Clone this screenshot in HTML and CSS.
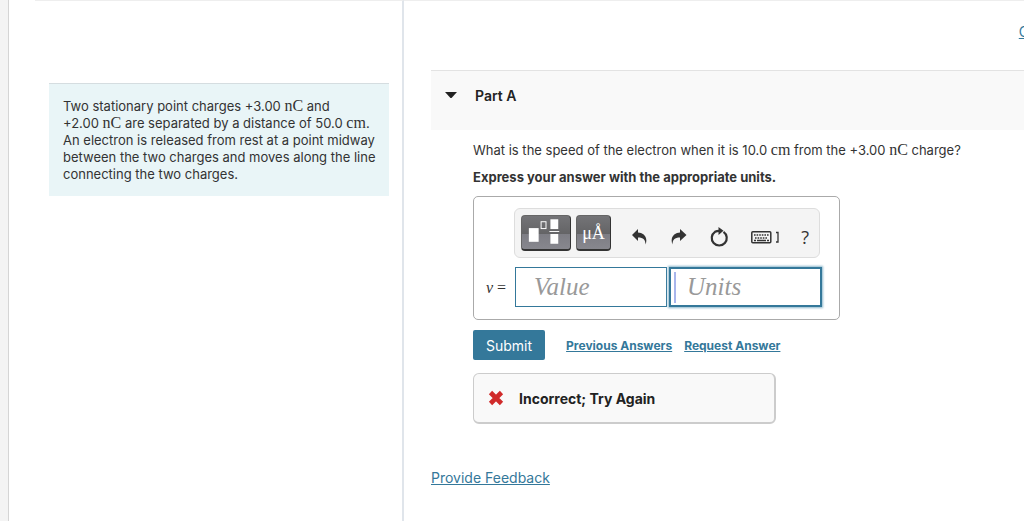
FILE: index.html
```html
<!DOCTYPE html>
<html lang="en">
<head>
    <meta charset="UTF-8">
    <meta name="viewport" content="width=device-width, initial-scale=1.0">
    <title>Part A</title>
    <link rel="stylesheet" href="styles.css">
</head>
<body>
    <div class="page">
        <aside class="sidebar">
            <p class="problem">Two stationary point charges +3.00 <span class="unit">nC</span> and <span class="quantity">+2.00 <span class="unit">nC</span></span> are separated by a distance of 50.0 <span class="unit">cm</span>. An electron is released from rest at a point midway between the two charges and moves along the line connecting the two charges.</p>
        </aside>

        <main class="content">
            <div class="top-links"><a href="#">C</a></div>

            <div class="part-header">
                <svg class="caret" width="12" height="7" viewBox="0 0 12 7"><path d="M0 0h12L7 5.500Q6 6.500 5 5.500z" fill="#222"/></svg>
                <h2>Part A</h2>
            </div>

            <form class="part-body" onsubmit="return false">
                <p class="question">What is the speed of the electron when it is 10.0 <span class="unit">cm</span> from the +3.00 <span class="unit">nC</span> charge?</p>
                <p class="instructions">Express your answer with the appropriate units.</p>

                <div class="answer-box">
                    <div class="toolbar">
                        <button type="button" class="tool tool-dark tool-wide" aria-label="Templates">
                            <svg width="49" height="33" viewBox="0 0 49 33">
                                <rect x="7" y="12" width="10" height="14" fill="#fff"/>
                                <rect x="19.500" y="5.500" width="5" height="7" fill="none" stroke="#fff"/>
                                <rect x="29" y="3" width="8" height="10" fill="#fff"/>
                                <path d="M28 15.500h10" stroke="#fff"/>
                                <rect x="29" y="18" width="8" height="10" fill="#fff"/>
                            </svg>
                        </button>
                        <button type="button" class="tool tool-dark">μÅ</button>
                        <div class="tool-group">
                            <button type="button" class="tool tool-plain" aria-label="Undo">
                                <svg width="17" height="18" viewBox="0 0 17 18"><path d="M1 7L7 1v3.500C12 4.500 17.500 9 14.500 16.500C14.500 12 12.500 9.500 7 9.500V13z" fill="#333"/></svg>
                            </button>
                            <button type="button" class="tool tool-plain" aria-label="Redo">
                                <svg width="17" height="18" viewBox="0 0 17 18"><path d="M16.500 7L10 1v3.500C5 4.500 -.500 9 2.500 16.500C2.500 12 4.500 9.500 10 9.500V13z" fill="#333"/></svg>
                            </button>
                            <button type="button" class="tool tool-plain" aria-label="Reset">
                                <svg width="19" height="20" viewBox="0 0 19 20"><path d="M13.500 4.800A7.500 7.500 0 1 1 5 4.800Q7 3.700 10 3.800" fill="none" stroke="#333" stroke-width="2.200"/><path d="M8.500 0l5 3.800L8.500 8z" fill="#333"/></svg>
                            </button>
                            <button type="button" class="tool tool-plain" aria-label="Keyboard shortcuts">
                                <svg width="28" height="14" viewBox="0 0 28 14"><rect x=".800" y="1.800" width="19" height="11" rx="1" fill="none" stroke="#333" stroke-width="1.500"/><path d="M3 5h15M4 8h13" stroke="#333" stroke-width="1.600" stroke-dasharray="1.600 1"/><path d="M3 10.500h2M6 10.500h9M16 10.500h2" stroke="#333" stroke-width="1.400"/><path d="M25 2.500h2v9.500h-2" fill="none" stroke="#333" stroke-width="1.300"/></svg>
                            </button>
                            <button type="button" class="tool tool-plain help">?</button>
                        </div>
                    </div>
                    <div class="answer-row">
                        <label class="variable" for="value"><i>v</i> =</label>
                        <input type="text" class="field" id="value" placeholder="Value">
                        <input type="text" class="field field-active" id="units" placeholder="Units" aria-label="Units">
                    </div>
                </div>

                <div class="actions">
                    <button type="submit" class="submit">Submit</button>
                    <a href="#">Previous Answers</a>
                    <a href="#">Request Answer</a>
                </div>

                <div class="result">
                    <svg width="16" height="16" viewBox="0 0 16 16"><path d="M2.500 2.500l11 11M13.500 2.500l-11 11" stroke="#d02b2b" stroke-width="4.600"/></svg>
                    <span>Incorrect; Try Again</span>
                </div>
            </form>

            <a class="feedback" href="#">Provide Feedback</a>
        </main>
    </div>
</body>
</html>
```

FILE: styles.css
```css
* {
    box-sizing: border-box;
}
body {
    margin: 0;
    font-family: Inter, "Liberation Sans", Arial, sans-serif;
    font-size: 13px;
    line-height: 17px;
    color: #333;
    background-color: #fff;
    border-left: 8px solid #f4f4f4;
}
h2, p {
    margin: 0;
}
a {
    color: #34789a;
}
.page {
    display: flex;
    min-height: 100vh;
    border-left: 1px solid #d5d5d5;
    padding-left: 26px;
    overflow: hidden;
}
.sidebar {
    flex: 0 0 369px;
    padding: 82px 13px 0 14px;
    border-top: 1px solid #eee;
    border-right: 2px solid #e0e5eb;
}
.problem {
    padding: 14px 8px 13px 14px;
    background-color: #e9f5f7;
    border-top: 1px solid #d5dde0;
}
.quantity {
    white-space: nowrap;
}
.unit {
    font-family: "Liberation Serif", "Times New Roman", serif;
    font-size: 16px;
    line-height: 1;
}
.content {
    flex: 1;
    min-width: 0;
    padding-left: 27px;
    border-top: 1px solid #eee;
}
.top-links {
    height: 69px;
    padding-top: 22px;
    margin-right: -5px;
    text-align: right;
    font-size: 14px;
}
.part-header {
    display: flex;
    align-items: center;
    gap: 18px;
    height: 60px;
    padding: 0 14px 10px;
    background-color: #f9f9f9;
    border-top: 1px solid #e3e3e3;
}
.part-header h2 {
    font-size: 14px;
    font-weight: 600;
    color: #222;
}
.part-body {
    padding: 12px 12px 0 42px;
}
.instructions {
    margin-top: 10px;
    font-weight: bold;
}
.answer-box {
    width: fit-content;
    margin-top: 10px;
    padding: 11px 17px 12px 12px;
    border: 1px solid #aaa;
    border-radius: 5px;
}
.toolbar {
    display: flex;
    align-items: center;
    gap: 5px;
    height: 50px;
    margin: 0 2px 0 28px;
    padding: 0 6px;
    background-color: #f4f4f4;
    border: 1px solid #ddd;
    border-radius: 6px;
}
.tool {
    display: flex;
    align-items: center;
    justify-content: center;
    height: 36px;
    padding: 0;
    border: 0;
    background: none;
    color: #333;
    cursor: pointer;
}
.tool-dark {
    width: 35px;
    padding-top: 2px;
    color: #fff;
    font-family: "Liberation Serif", "Times New Roman", serif;
    font-size: 18px;
    background: linear-gradient(#747477, #646466 54%, #7d7d84 54%, #87878e);
    border: 1px solid #666;
    border-right-color: #333;
    border-bottom: 2px solid #333;
    border-radius: 4px;
}
.tool-wide {
    width: 50px;
    padding-top: 0;
}
.tool-group {
    flex: 1;
    display: flex;
    align-items: center;
    justify-content: space-between;
    padding: 8px 4px 0 15px;
}
.help {
    font-family: "Open Sans", sans-serif;
    font-size: 18px;
}
.answer-row {
    display: flex;
    align-items: center;
    gap: 2px;
    margin-top: 9px;
}
.variable {
    width: 27px;
    font-family: "Liberation Serif", "Times New Roman", serif;
    font-size: 16px;
}
.field {
    width: 152px;
    height: 40px;
    padding: 0 18px;
    border: 1px solid #34789a;
    font-family: "Liberation Serif", "Times New Roman", serif;
    font-size: 25px;
    font-style: italic;
}
.field::placeholder {
    color: #999;
}
.field-active {
    width: 153px;
    padding: 0 16px;
    border-width: 2px;
    background: linear-gradient(#a9b6ec, #a9b6ec) 3px 3px / 2px 31px no-repeat;
    box-shadow: 0 0 2px 1px #8db8cc;
    outline: none;
}
.actions {
    display: flex;
    align-items: center;
    gap: 12px;
    margin-top: 10px;
    font-size: 12px;
    font-weight: bold;
}
.submit {
    height: 30px;
    margin-right: 9px;
    padding: 0 13px;
    border: 0;
    border-radius: 2px;
    background-color: #34789a;
    color: #fff;
    font-family: inherit;
    font-size: 14px;
    cursor: pointer;
}
.result {
    display: flex;
    align-items: center;
    gap: 15px;
    max-width: 303px;
    height: 51px;
    margin-top: 13px;
    padding: 0 14px;
    border: 1px solid #ccc;
    border-right-width: 2px;
    border-bottom-width: 2px;
    border-radius: 6px;
    background-color: #f9f9f9;
    color: #222;
    font-size: 14px;
    font-weight: bold;
}
.feedback {
    display: inline-block;
    margin-top: 45px;
    font-size: 14px;
}
```
